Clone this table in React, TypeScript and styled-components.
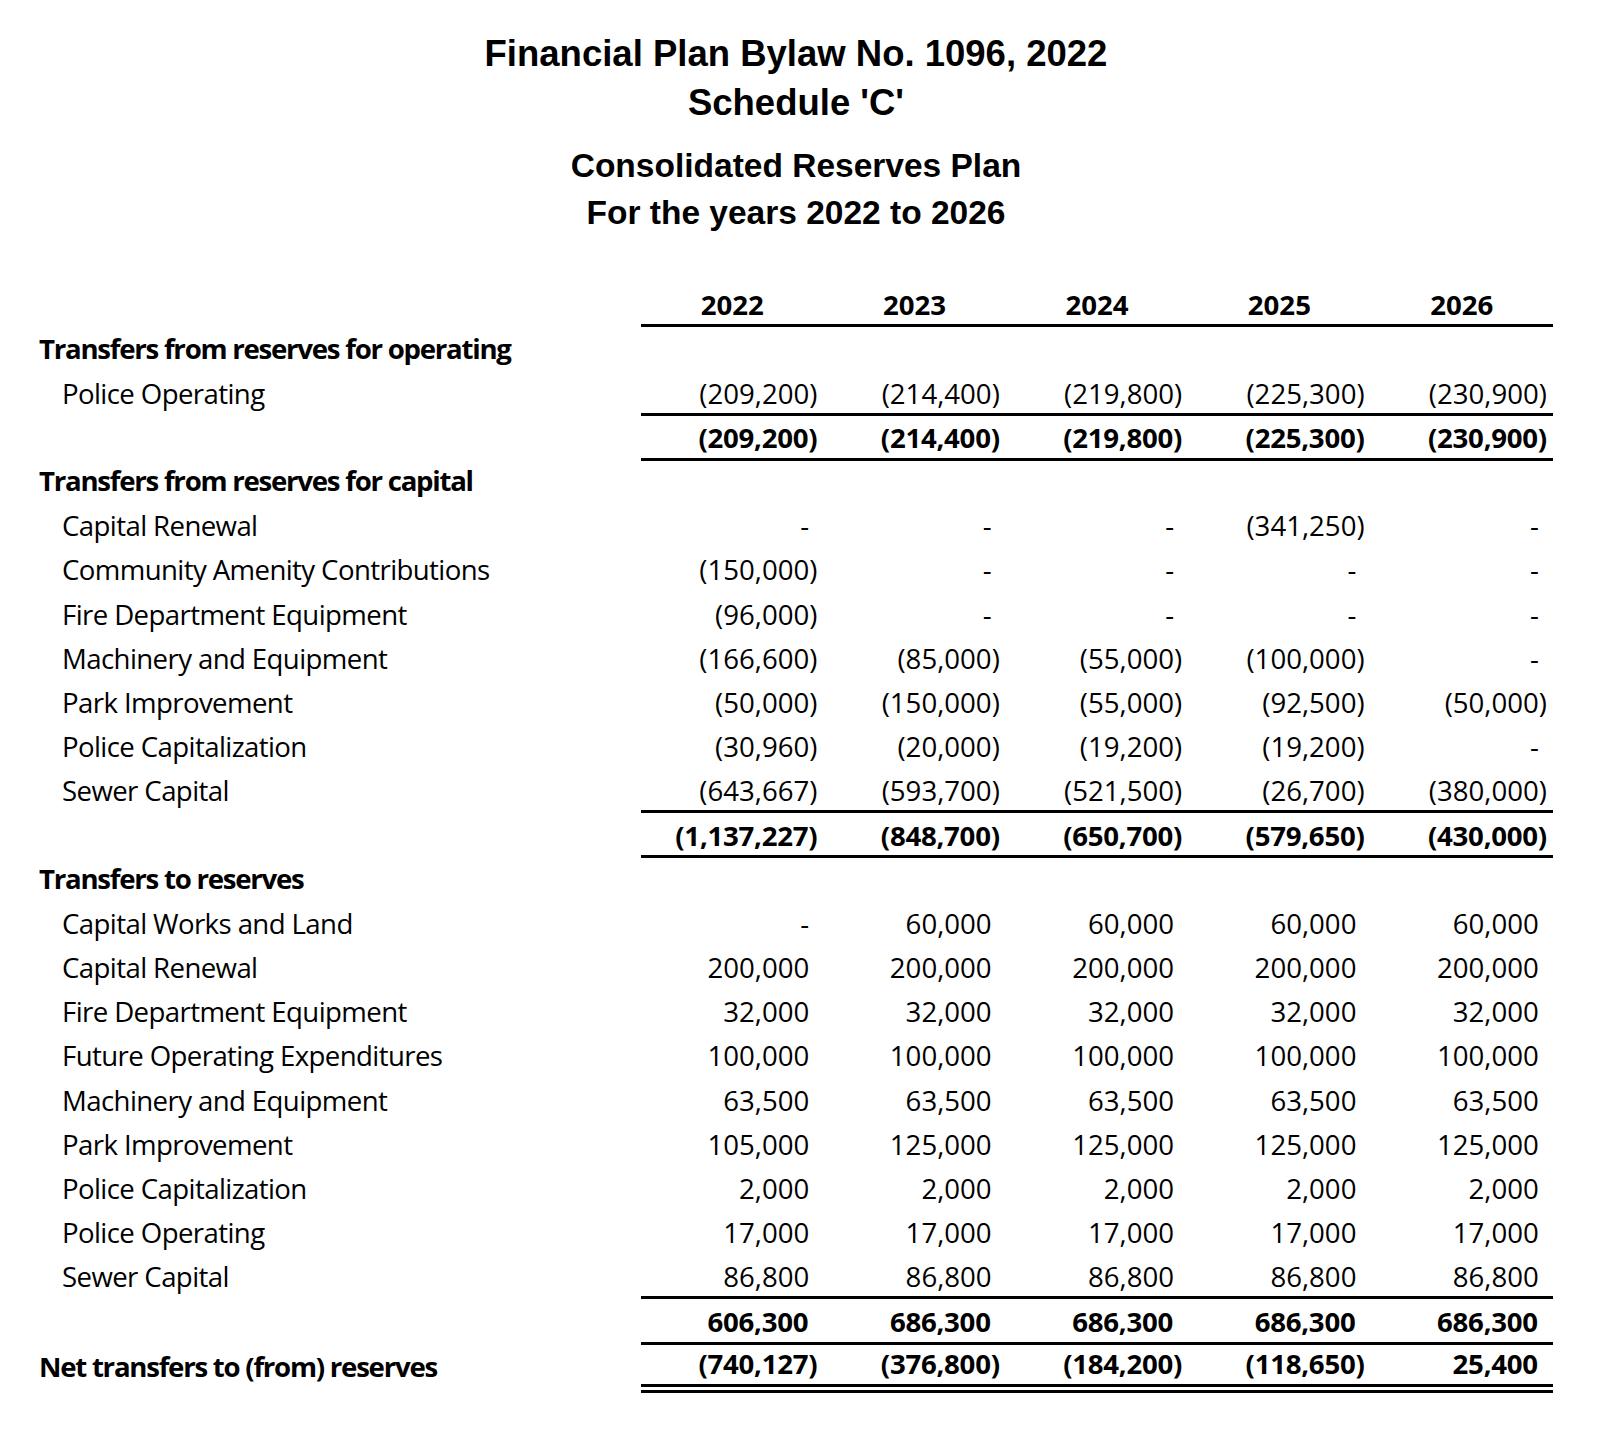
import React from "react";
import styled, { createGlobalStyle } from "styled-components";

const GlobalStyle = createGlobalStyle`
  html, body { margin: 0; padding: 0; background: #ffffff; }
  body { font-family: "Open Sans", "Liberation Sans", sans-serif; color: #000; }
`;

const Page = styled.div`
  width: 1600px;
  min-height: 1451px;
  box-sizing: border-box;
  padding: 30px 47px 0 39px;
`;

const TitleBlock = styled.div<{ $gap: number; $size: number; $lh: number }>`
  margin-top: ${(p) => p.$gap}px;
  text-align: center;
  font-family: "Liberation Sans", Arial, sans-serif;
  font-weight: 700;
  font-size: ${(p) => p.$size}px;
  line-height: ${(p) => p.$lh}px;
`;

const TitleLine = styled.div``;

const Table = styled.div`
  margin-top: 47px;
  width: 1514px;
`;

const Row = styled.div<{ $height: number; $shift: number }>`
  display: grid;
  grid-template-columns: 602px repeat(5, 182.4px);
  height: ${(p) => p.$height}px;
  margin-top: ${(p) => -p.$shift}px;
  font-size: 27.6px;
`;

const Label = styled.div<{ $bold?: boolean; $indent?: boolean }>`
  display: flex;
  align-items: center;
  padding-left: ${(p) => (p.$indent ? 23 : 0)}px;
  font-weight: ${(p) => (p.$bold ? 700 : 400)};
  letter-spacing: ${(p) => (p.$bold ? -1.25 : -0.6)}px;
  white-space: nowrap;
  line-height: 1;
`;

const Cell = styled.div<{ $bold?: boolean; $top?: boolean; $double?: boolean }>`
  display: flex;
  align-items: center;
  justify-content: flex-end;
  box-sizing: border-box;
  padding-right: 6px;
  line-height: 1;
  font-weight: ${(p) => (p.$bold ? 700 : 400)};
  letter-spacing: ${(p) => (p.$bold ? -0.25 : 0)}px;
  border-top: ${(p) => (p.$top ? "3px solid #000" : "0")};
  border-bottom: ${(p) => (p.$double ? "9px double #000" : "0")};
  white-space: nowrap;
`;

const YearCell = styled.div`
  display: flex;
  align-items: center;
  justify-content: center;
  box-sizing: border-box;
  border-bottom: 3px solid #000;
  font-weight: 700;
  line-height: 1;
  padding-top: 3px;
`;

const Pad = styled.span`
  visibility: hidden;
`;

type RowData = {
  label?: string;
  kind: "section" | "item" | "total" | "net";
  values?: string[];
  top?: boolean;
  shift?: number;
};

const years = ["2022", "2023", "2024", "2025", "2026"];

const rows: RowData[] = [
  { label: "Transfers from reserves for operating", kind: "section" },
  { label: "Police Operating", kind: "item", values: ["(209,200)", "(214,400)", "(219,800)", "(225,300)", "(230,900)"] },
  { kind: "total", top: true, values: ["(209,200)", "(214,400)", "(219,800)", "(225,300)", "(230,900)"] },
  { label: "Transfers from reserves for capital", kind: "section", top: true, shift: 2 },
  { label: "Capital Renewal", kind: "item", values: ["-", "-", "-", "(341,250)", "-"] },
  { label: "Community Amenity Contributions", kind: "item", values: ["(150,000)", "-", "-", "-", "-"] },
  { label: "Fire Department Equipment", kind: "item", values: ["(96,000)", "-", "-", "-", "-"] },
  { label: "Machinery and Equipment", kind: "item", values: ["(166,600)", "(85,000)", "(55,000)", "(100,000)", "-"] },
  { label: "Park Improvement", kind: "item", values: ["(50,000)", "(150,000)", "(55,000)", "(92,500)", "(50,000)"] },
  { label: "Police Capitalization", kind: "item", values: ["(30,960)", "(20,000)", "(19,200)", "(19,200)", "-"] },
  { label: "Sewer Capital", kind: "item", values: ["(643,667)", "(593,700)", "(521,500)", "(26,700)", "(380,000)"] },
  { kind: "total", top: true, values: ["(1,137,227)", "(848,700)", "(650,700)", "(579,650)", "(430,000)"] },
  { label: "Transfers to reserves", kind: "section", top: true, shift: 2 },
  { label: "Capital Works and Land", kind: "item", values: ["-", "60,000", "60,000", "60,000", "60,000"] },
  { label: "Capital Renewal", kind: "item", values: ["200,000", "200,000", "200,000", "200,000", "200,000"] },
  { label: "Fire Department Equipment", kind: "item", values: ["32,000", "32,000", "32,000", "32,000", "32,000"] },
  { label: "Future Operating Expenditures", kind: "item", values: ["100,000", "100,000", "100,000", "100,000", "100,000"] },
  { label: "Machinery and Equipment", kind: "item", values: ["63,500", "63,500", "63,500", "63,500", "63,500"] },
  { label: "Park Improvement", kind: "item", values: ["105,000", "125,000", "125,000", "125,000", "125,000"] },
  { label: "Police Capitalization", kind: "item", values: ["2,000", "2,000", "2,000", "2,000", "2,000"] },
  { label: "Police Operating", kind: "item", values: ["17,000", "17,000", "17,000", "17,000", "17,000"] },
  { label: "Sewer Capital", kind: "item", values: ["86,800", "86,800", "86,800", "86,800", "86,800"] },
  { kind: "total", top: true, values: ["606,300", "686,300", "686,300", "686,300", "686,300"] },
  { label: "Net transfers to (from) reserves", kind: "net", top: true, shift: 2, values: ["(740,127)", "(376,800)", "(184,200)", "(118,650)", "25,400"] },
];

const Amount: React.FC<{ value: string }> = ({ value }) => {
  const neg = value.startsWith("(");
  return (
    <>
      {value}
      {!neg && <Pad>)</Pad>}
    </>
  );
};

const ROW_H = 44.2;
const RULE_SHIFT = 3;

export default function App() {
  return (
    <>
      <GlobalStyle />
      <Page>
        <TitleBlock $gap={0} $size={36.5} $lh={48.5}>
          <TitleLine>Financial Plan Bylaw No. 1096, 2022</TitleLine>
          <TitleLine>Schedule 'C'</TitleLine>
        </TitleBlock>
        <TitleBlock $gap={15} $size={33.5} $lh={47}>
          <TitleLine>Consolidated Reserves Plan</TitleLine>
          <TitleLine>For the years 2022 to 2026</TitleLine>
        </TitleBlock>
        <Table>
          <Row $height={ROW_H} $shift={0}>
            <Label />
            {years.map((y) => (
              <YearCell key={y}>{y}</YearCell>
            ))}
          </Row>
          {rows.map((r, i) => {
            const bold = r.kind !== "item";
            const isNet = r.kind === "net";
            const shift = r.top ? r.shift ?? RULE_SHIFT : 0;
            const h = (isNet ? 49.5 : ROW_H) + shift;
            return (
              <Row key={i} $height={h} $shift={shift}>
                <Label $bold={bold} $indent={r.kind === "item"}>
                  {r.label ?? ""}
                </Label>
                {[0, 1, 2, 3, 4].map((c) => (
                  <Cell key={c} $bold={bold} $top={r.top} $double={isNet}>
                    {r.values ? <Amount value={r.values[c]} /> : null}
                  </Cell>
                ))}
              </Row>
            );
          })}
        </Table>
      </Page>
    </>
  );
}
